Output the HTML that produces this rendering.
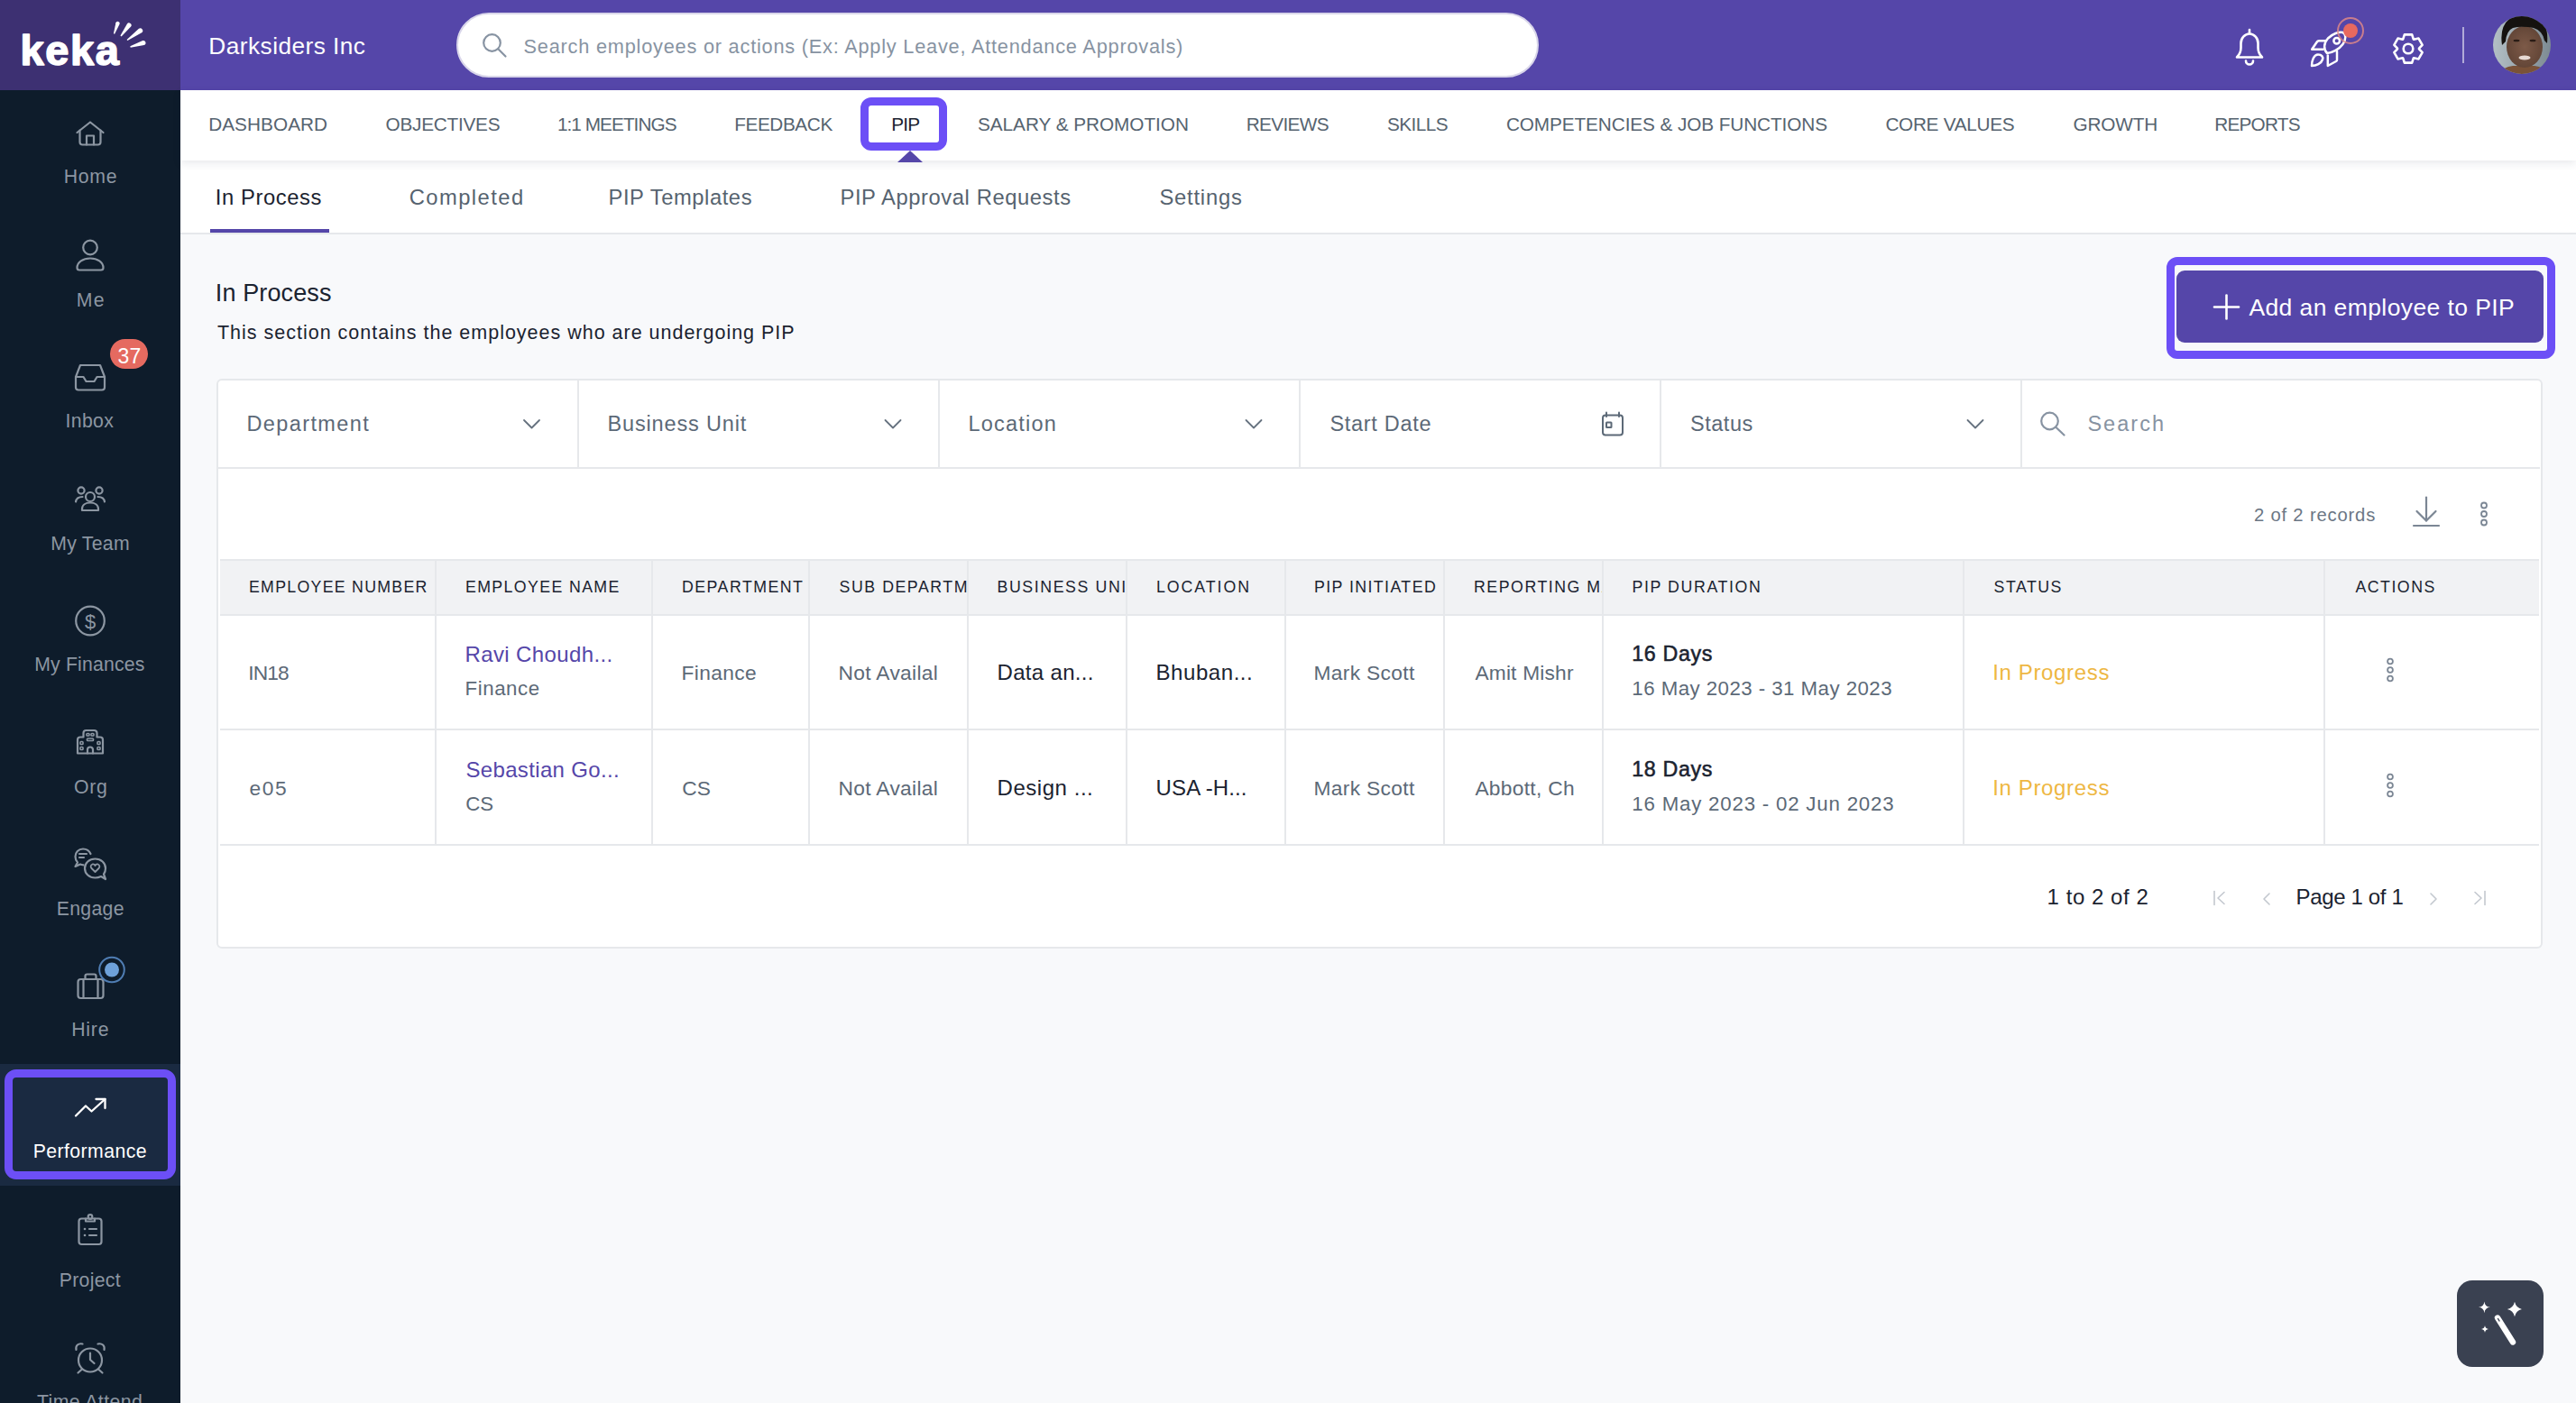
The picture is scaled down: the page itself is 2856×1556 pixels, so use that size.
<!DOCTYPE html>
<html><head><meta charset="utf-8"><style>
html,body{margin:0;padding:0}
body{width:2856px;height:1556px;overflow:hidden;position:relative;background:#f8f9fb;font-family:"Liberation Sans",sans-serif}
.t{position:absolute;white-space:nowrap;z-index:5}
svg{position:absolute;overflow:visible;z-index:4}
</style></head><body>

<div style="position:absolute;left:0;top:0;width:200px;height:1556px;background:#0e1c2b"></div>
<div style="position:absolute;left:0;top:0;width:200px;height:100px;background:#3d3072"></div>
<div style="position:absolute;left:200px;top:0;width:2656px;height:100px;background:#5546a9"></div>
<div style="position:absolute;left:506px;top:14px;width:1196px;height:68px;border:2px solid #d9d6ea;border-radius:36px;background:#fff"></div>
<div style="position:absolute;left:200px;top:100px;width:2656px;height:78px;background:#fff;box-shadow:0 3px 9px rgba(30,40,70,0.10);z-index:2"></div>
<div style="position:absolute;left:200px;top:178px;width:2656px;height:80px;background:#fff;border-bottom:2px solid #e6e8eb"></div>
<div style="position:absolute;left:954px;top:108px;width:78px;height:41px;border:9px solid #6c4ff6;border-radius:12px;z-index:3"></div>
<div style="position:absolute;left:995px;top:167px;width:0;height:0;border-left:14px solid transparent;border-right:14px solid transparent;border-bottom:13px solid #5546a9;z-index:3"></div>
<div style="position:absolute;left:233px;top:254px;width:132px;height:4px;background:#5546a9"></div>
<div style="position:absolute;left:0;top:1180px;width:200px;height:135px;background:#1a2a41"></div>
<div style="position:absolute;left:5px;top:1186px;width:172px;height:104px;border:9px solid #6c4ff6;border-radius:13px"></div>
<div style="position:absolute;left:2402px;top:285px;width:413px;height:95px;border:9px solid #6c4ff6;border-radius:12px"></div>
<div style="position:absolute;left:2413px;top:300px;width:407px;height:80px;border-radius:9px;background:#5546a9"></div>
<div style="position:absolute;left:240px;top:420px;width:2575px;height:628px;border:2px solid #e6e8eb;border-radius:6px;background:#fff"></div>
<div style="position:absolute;left:242px;top:518px;width:2574px;height:2px;background:#e6e8eb"></div>
<div style="position:absolute;left:640px;top:422px;width:2px;height:96px;background:#e6e8eb"></div>
<div style="position:absolute;left:1040px;top:422px;width:2px;height:96px;background:#e6e8eb"></div>
<div style="position:absolute;left:1440px;top:422px;width:2px;height:96px;background:#e6e8eb"></div>
<div style="position:absolute;left:1840px;top:422px;width:2px;height:96px;background:#e6e8eb"></div>
<div style="position:absolute;left:2240px;top:422px;width:2px;height:96px;background:#e6e8eb"></div>
<div style="position:absolute;left:244px;top:620px;width:2571px;height:61px;background:#f1f2f4"></div>
<div style="position:absolute;left:244px;top:620px;width:2571px;height:2px;background:#e6e8eb"></div>
<div style="position:absolute;left:244px;top:681px;width:2571px;height:2px;background:#e6e8eb"></div>
<div style="position:absolute;left:244px;top:807.5px;width:2571px;height:2px;background:#e6e8eb"></div>
<div style="position:absolute;left:244px;top:935.5px;width:2571px;height:2px;background:#e6e8eb"></div>
<div style="position:absolute;left:482px;top:620px;width:2px;height:317px;background:#e6e8eb"></div>
<div style="position:absolute;left:722px;top:620px;width:2px;height:317px;background:#e6e8eb"></div>
<div style="position:absolute;left:896px;top:620px;width:2px;height:317px;background:#e6e8eb"></div>
<div style="position:absolute;left:1072px;top:620px;width:2px;height:317px;background:#e6e8eb"></div>
<div style="position:absolute;left:1248px;top:620px;width:2px;height:317px;background:#e6e8eb"></div>
<div style="position:absolute;left:1424px;top:620px;width:2px;height:317px;background:#e6e8eb"></div>
<div style="position:absolute;left:1600px;top:620px;width:2px;height:317px;background:#e6e8eb"></div>
<div style="position:absolute;left:1776px;top:620px;width:2px;height:317px;background:#e6e8eb"></div>
<div style="position:absolute;left:2176px;top:620px;width:2px;height:317px;background:#e6e8eb"></div>
<div style="position:absolute;left:2576px;top:620px;width:2px;height:317px;background:#e6e8eb"></div>
<div style="position:absolute;left:2724px;top:1420px;width:96px;height:96px;border-radius:17px;background:#3a4151"></div>
<div style="position:absolute;left:122px;top:376px;width:42px;height:33px;border-radius:17px;background:#e56a60;z-index:1"></div>

<svg width="2856" height="1556" viewBox="0 0 2856 1556" style="left:0;top:0"><text x="22.5" y="72" font-family="Liberation Sans" font-weight="700" font-size="47" letter-spacing="1.6" fill="#fff" stroke="#fff" stroke-width="1.6" stroke-linejoin="round">keka</text><path d="M127.07 37.70 L132.58 26.72 A2.20 2.20 0 0 0 128.42 25.28 L125.93 37.30 Z" fill="#fff"/><path d="M134.56 40.42 L145.08 29.56 A2.60 2.60 0 0 0 140.92 26.44 L133.44 39.58 Z" fill="#fff"/><path d="M141.41 45.07 L157.08 36.19 A2.70 2.70 0 0 0 153.92 31.81 L140.59 43.93 Z" fill="#fff"/><path d="M144.71 52.67 L159.77 49.98 A2.60 2.60 0 0 0 158.23 45.02 L144.29 51.33 Z" fill="#fff"/><circle cx="545.5" cy="47.5" r="9.3" fill="none" stroke="#8793a2" stroke-width="2.2"/><line x1="552.5" y1="54.5" x2="560.5" y2="62.5" stroke="#8793a2" stroke-width="2.2" stroke-linecap="round"/><g fill="none" stroke="#fff" stroke-width="2.6" stroke-linejoin="round" stroke-linecap="round"><path d="M2494 33 V36.5"/><path d="M2480 63.5 Q2484.5 59 2484.5 53 V48 A9.5 10.5 0 0 1 2503.5 48 V53 Q2503.5 59 2508 63.5 Z"/><path d="M2490 67.5 A4 4 0 0 0 2498 67.5"/></g><g fill="none" stroke="#fff" stroke-width="2.5" stroke-linejoin="round" stroke-linecap="round"><path d="M2580 59 C2576 55 2576 48 2581 42.5 C2586 37.5 2593 35 2597.5 36 C2601.5 37.5 2601 44 2597.5 49 C2593.5 54.5 2586 58.5 2580 59 Z"/><path d="M2577.8 45.3 H2571 Q2569.5 45.3 2568.8 46.5 L2563.2 54.8 H2575.5"/><path d="M2591 57 V66.5 Q2591 67.5 2590 68 L2580.8 73 V61.5"/><path d="M2563 73 C2563 67 2565.5 60.5 2570 60.5 C2574 60.5 2576 63 2575 66 C2573.5 70.5 2568 73 2563 73 Z"/><circle cx="2590.7" cy="45.2" r="3.3"/></g><circle cx="2606" cy="34" r="14" fill="none" stroke="#e58b86" stroke-opacity="0.8" stroke-width="2"/><circle cx="2606" cy="34" r="8" fill="#e8695f"/><path d="M2664.25 43.47 L2665.84 38.34 L2674.16 38.34 L2675.75 43.47 L2676.24 43.75 L2681.48 42.57 L2685.64 49.78 L2682.00 53.72 L2682.00 54.28 L2685.64 58.22 L2681.48 65.43 L2676.24 64.25 L2675.75 64.53 L2674.16 69.66 L2665.84 69.66 L2664.25 64.53 L2663.76 64.25 L2658.52 65.43 L2654.36 58.22 L2658.00 54.28 L2658.00 53.72 L2654.36 49.78 L2658.52 42.57 L2663.76 43.75 Z" fill="none" stroke="#fff" stroke-width="2.6" stroke-linejoin="round"/><circle cx="2670" cy="54" r="5.3" fill="none" stroke="#fff" stroke-width="2.6"/><rect x="2730" y="30" width="2" height="40" fill="#ffffff" fill-opacity="0.55"/><defs><clipPath id="av"><circle cx="2796" cy="50" r="32"/></clipPath><linearGradient id="avbg" x1="0" y1="0" x2="1" y2="0"><stop offset="0" stop-color="#b3bfc5"/><stop offset="1" stop-color="#7d8b93"/></linearGradient><radialGradient id="sk" cx="0.5" cy="0.5" r="0.6"><stop offset="0" stop-color="#7d5a48"/><stop offset="1" stop-color="#5e4234"/></radialGradient></defs><g clip-path="url(#av)"><rect x="2764" y="18" width="64" height="64" fill="url(#avbg)"/><path d="M2770 84 Q2774 74 2786 73 H2810 Q2822 74 2826 84 Z" fill="#7a5238"/><ellipse cx="2799" cy="52" rx="20" ry="23" fill="url(#sk)"/><path d="M2774 50 Q2771 30 2782 21 Q2797 11 2813 18 Q2826 26 2824 48 L2821 45 Q2819 34 2809 31 Q2797 28.5 2786 31 Q2779 34 2778 46 Z" fill="#15120f"/><ellipse cx="2790" cy="45" rx="3.5" ry="1.3" fill="#2a1c15"/><ellipse cx="2808" cy="45" rx="3.5" ry="1.3" fill="#2a1c15"/><ellipse cx="2799" cy="64" rx="6.5" ry="2.4" fill="#e6d9d2"/></g><g fill="none" stroke="#8c96a2" stroke-width="2.2" stroke-linejoin="round" stroke-linecap="round"><path d="M85.5 147 L100 135.5 L114.5 147"/><path d="M88.5 144.5 V157.5 a3 3 0 0 0 3 3 H108.5 a3 3 0 0 0 3 -3 V144.5"/><path d="M96 160.5 V150.5 H104 V160.5"/></g><g fill="none" stroke="#8c96a2" stroke-width="2.2" stroke-linejoin="round" stroke-linecap="round"><circle cx="100" cy="274.5" r="7.8"/><path d="M88 299.5 H112 a2.5 2.5 0 0 0 2.5 -2.5 C114.5 290.5 108 286.5 100 286.5 C92 286.5 85.5 290.5 85.5 297 a2.5 2.5 0 0 0 2.5 2.5 Z"/></g><g fill="none" stroke="#8c96a2" stroke-width="2.2" stroke-linejoin="round" stroke-linecap="round"><path d="M89 405 H111 L116 418 V429.5 a3 3 0 0 1 -3 3 H87 a3 3 0 0 1 -3 -3 V418 Z"/><path d="M84 418 H92.5 L95.5 423 H104.5 L107.5 418 H116"/></g><g fill="none" stroke="#8c96a2" stroke-width="2.2" stroke-linejoin="round" stroke-linecap="round"><circle cx="100" cy="551" r="5"/><path d="M91 566 V564.5 C91 560 95 557.5 100 557.5 C105 557.5 109 560 109 564.5 V566 Z"/><circle cx="90" cy="544" r="3.6"/><circle cx="110" cy="544" r="3.6"/><path d="M84 556.5 C84.5 553 87 551 91.5 551"/><path d="M116 556.5 C115.5 553 113 551 108.5 551"/></g><g fill="none" stroke="#8c96a2" stroke-width="2.2" stroke-linejoin="round" stroke-linecap="round"><circle cx="100" cy="688.5" r="15.8"/></g><text x="100" y="697" text-anchor="middle" font-family="Liberation Sans" font-size="22" fill="#8c96a2">$</text><g fill="none" stroke="#8c96a2" stroke-width="2.2" stroke-linejoin="round" stroke-linecap="round"><path d="M86 835.5 V820.5 a3 3 0 0 1 3 -3 H92.5 V813 a3 3 0 0 1 3 -3 H104.5 a3 3 0 0 1 3 3 V817.5 H111 a3 3 0 0 1 3 3 V835.5 Z"/><path d="M97 835.5 V831.5 a3 3 0 0 1 6 0 V835.5"/></g><rect x="89" y="822.5" width="3" height="3" rx="0.8" fill="none" stroke="#8c96a2" stroke-width="1.6"/><rect x="89" y="828.5" width="3" height="3" rx="0.8" fill="none" stroke="#8c96a2" stroke-width="1.6"/><rect x="108" y="822.5" width="3" height="3" rx="0.8" fill="none" stroke="#8c96a2" stroke-width="1.6"/><rect x="108" y="828.5" width="3" height="3" rx="0.8" fill="none" stroke="#8c96a2" stroke-width="1.6"/><rect x="96" y="813.5" width="3" height="2.5" rx="0.8" fill="none" stroke="#8c96a2" stroke-width="1.6"/><rect x="101" y="813.5" width="3" height="2.5" rx="0.8" fill="none" stroke="#8c96a2" stroke-width="1.6"/><rect x="96.5" y="819" width="7" height="2.5" rx="0.8" fill="none" stroke="#8c96a2" stroke-width="1.6"/><g fill="none" stroke="#8c96a2" stroke-width="2.2" stroke-linejoin="round" stroke-linecap="round"><path d="M100.5 947 C99 943.5 96 941.5 92 941.5 C87 941.5 83.5 945.5 83.5 950 C83.5 953 84.5 955 86 956.5 L83.5 961 L89 958.5 C90 959 91 959.2 92.5 959.3"/><path d="M105.5 952.5 C99 952.5 94 957 94 963 C94 969 99 973.5 105.5 973.5 C108 973.5 110 973 112 972 L117 975 L115 969.5 C116.5 967.5 117 965.5 117 963 C117 957 112 952.5 105.5 952.5 Z"/><path d="M88 947 H96"/><path d="M88 951 H93"/><path d="M105.5 967 L101.5 963 C100 961.5 100.5 959 102.5 958.5 C104 958.2 105 959 105.5 960 C106 959 107 958.2 108.5 958.5 C110.5 959 111 961.5 109.5 963 Z" stroke-width="1.8"/></g><g fill="none" stroke="#8c96a2" stroke-width="2.2" stroke-linejoin="round" stroke-linecap="round"><rect x="86.5" y="1086" width="28" height="21" rx="3"/><path d="M94.5 1086 V1082.5 a2 2 0 0 1 2 -2 H104.5 a2 2 0 0 1 2 2 V1086"/><path d="M92.5 1086 V1107"/><path d="M108.5 1086 V1107"/></g><circle cx="124" cy="1075.5" r="13.8" fill="#0e1c2b" stroke="#4f7db3" stroke-width="2"/><circle cx="124" cy="1075.5" r="8" fill="#6ea1d9"/><g fill="none" stroke="#fff" stroke-width="2.3" stroke-linejoin="round" stroke-linecap="round"><path d="M84 1237.5 L95 1226.5 L101.5 1232.5 L116.5 1219"/><path d="M106.5 1219 H116.5 V1229"/></g><g fill="none" stroke="#8c96a2" stroke-width="2.2" stroke-linejoin="round" stroke-linecap="round"><rect x="87.5" y="1351.5" width="25" height="28.5" rx="3"/><path d="M95 1351.5 V1354.5 H105 V1351.5"/><circle cx="100" cy="1349.5" r="2.3"/><path d="M99 1363 H107"/><path d="M99 1370 H107"/></g><circle cx="94" cy="1363" r="1.3" fill="#8c96a2"/><circle cx="94" cy="1370" r="1.3" fill="#8c96a2"/><g fill="none" stroke="#8c96a2" stroke-width="2.2" stroke-linejoin="round" stroke-linecap="round"><circle cx="100" cy="1508.5" r="13"/><path d="M100 1500.5 V1508 L104.5 1512"/><path d="M84.5 1497 C83.5 1492 87 1489.5 91.5 1490.5"/><path d="M115.5 1497 C116.5 1492 113 1489.5 108.5 1490.5"/><path d="M91 1518.5 L86.5 1522.5"/><path d="M109 1518.5 L113.5 1522.5"/></g><g stroke="#fff" stroke-width="2.6" stroke-linecap="round"><path d="M2468.5 327.5 V353.5"/><path d="M2455 340.5 H2482"/></g><path d="M581.0 466 L589.5 474.5 L598.0 466" fill="none" stroke="#66727f" stroke-width="1.8" stroke-linecap="round" stroke-linejoin="round"/><path d="M981.5 466 L990 474.5 L998.5 466" fill="none" stroke="#66727f" stroke-width="1.8" stroke-linecap="round" stroke-linejoin="round"/><path d="M1381.5 466 L1390 474.5 L1398.5 466" fill="none" stroke="#66727f" stroke-width="1.8" stroke-linecap="round" stroke-linejoin="round"/><path d="M2181.5 466 L2190 474.5 L2198.5 466" fill="none" stroke="#66727f" stroke-width="1.8" stroke-linecap="round" stroke-linejoin="round"/><g fill="none" stroke="#5c6977" stroke-width="2" stroke-linejoin="round" stroke-linecap="round"><rect x="1777" y="460.5" width="22" height="22" rx="3"/><path d="M1781 457.5 V462"/><path d="M1795 457.5 V462"/><rect x="1781" y="468.5" width="5.5" height="5.5" rx="0.5"/></g><circle cx="2272.5" cy="467" r="9.3" fill="none" stroke="#8793a2" stroke-width="2.2"/><line x1="2279.5" y1="474" x2="2288.5" y2="482.5" stroke="#8793a2" stroke-width="2.2" stroke-linecap="round"/><g fill="none" stroke="#7b8694" stroke-width="2.2" stroke-linecap="round" stroke-linejoin="round"><path d="M2690 551.5 V577.5"/><path d="M2679.5 567 L2690 577.5 L2700.5 567"/><path d="M2676 583 H2704"/></g><circle cx="2754" cy="560.5" r="3" fill="none" stroke="#7b8694" stroke-width="1.8"/><circle cx="2754" cy="570" r="3" fill="none" stroke="#7b8694" stroke-width="1.8"/><circle cx="2754" cy="579.5" r="3" fill="none" stroke="#7b8694" stroke-width="1.8"/><circle cx="2650" cy="733.5" r="2.9" fill="none" stroke="#7b8694" stroke-width="1.8"/><circle cx="2650" cy="743.0" r="2.9" fill="none" stroke="#7b8694" stroke-width="1.8"/><circle cx="2650" cy="752.5" r="2.9" fill="none" stroke="#7b8694" stroke-width="1.8"/><circle cx="2650" cy="861.5" r="2.9" fill="none" stroke="#7b8694" stroke-width="1.8"/><circle cx="2650" cy="871.0" r="2.9" fill="none" stroke="#7b8694" stroke-width="1.8"/><circle cx="2650" cy="880.5" r="2.9" fill="none" stroke="#7b8694" stroke-width="1.8"/><g fill="none" stroke="#c3c8cf" stroke-width="1.6" stroke-linecap="round" stroke-linejoin="round"><path d="M2455 988.5 V1003.5"/><path d="M2466 989.5 L2459 996 L2466 1002.5"/><path d="M2516 991 L2510 997 L2516 1003"/><path d="M2695 991 L2701 997 L2695 1003"/><path d="M2744 989.5 L2751 996 L2744 1002.5"/><path d="M2755 988.5 V1003.5"/></g><path d="M2754.4 1443.3999999999999 Q2754.9500000000003 1449.25 2760.8 1449.8 Q2754.9500000000003 1450.35 2754.4 1456.2 Q2753.85 1450.35 2748.0 1449.8 Q2753.85 1449.25 2754.4 1443.3999999999999 Z" fill="#fff"/><path d="M2788 1443.8 Q2789.5 1450.5 2796.2 1452 Q2789.5 1453.5 2788 1460.2 Q2786.5 1453.5 2779.8 1452 Q2786.5 1450.5 2788 1443.8 Z" fill="#fff"/><path d="M2755 1470 Q2755.4 1473.6 2759 1474 Q2755.4 1474.4 2755 1478 Q2754.6 1474.4 2751 1474 Q2754.6 1473.6 2755 1470 Z" fill="#fff"/><line x1="2769" y1="1461.5" x2="2786" y2="1488.5" stroke="#fff" stroke-width="6.4" stroke-linecap="round"/><line x1="2769.5" y1="1462.5" x2="2771" y2="1465" stroke="#3a4151" stroke-width="1.4" stroke-linecap="round"/></svg>
<div class="t" style="left:231.35px;top:37.88px;font-size:26.25px;line-height:26.25px;letter-spacing:0.454px;color:#ffffff;">Darksiders Inc</div>
<div class="t" style="left:580.50px;top:40.69px;font-size:21.75px;line-height:21.75px;letter-spacing:0.778px;color:#8793a2;">Search employees or actions (Ex: Apply Leave, Attendance Approvals)</div>
<div class="t" style="left:231.20px;top:127.64px;font-size:20.75px;line-height:20.75px;letter-spacing:0.056px;color:#56636f;">DASHBOARD</div>
<div class="t" style="left:427.50px;top:127.64px;font-size:20.75px;line-height:20.75px;letter-spacing:-0.233px;color:#56636f;">OBJECTIVES</div>
<div class="t" style="left:617.90px;top:127.64px;font-size:20.75px;line-height:20.75px;letter-spacing:-0.940px;color:#56636f;">1:1 MEETINGS</div>
<div class="t" style="left:814.20px;top:127.64px;font-size:20.75px;line-height:20.75px;letter-spacing:-0.401px;color:#56636f;">FEEDBACK</div>
<div class="t" style="left:988.20px;top:127.64px;font-size:20.75px;line-height:20.75px;letter-spacing:-0.753px;color:#1b2330;">PIP</div>
<div class="t" style="left:1084.00px;top:127.64px;font-size:20.75px;line-height:20.75px;letter-spacing:-0.032px;color:#56636f;">SALARY &amp; PROMOTION</div>
<div class="t" style="left:1381.70px;top:127.64px;font-size:20.75px;line-height:20.75px;letter-spacing:-0.643px;color:#56636f;">REVIEWS</div>
<div class="t" style="left:1538.00px;top:127.64px;font-size:20.75px;line-height:20.75px;letter-spacing:-0.565px;color:#56636f;">SKILLS</div>
<div class="t" style="left:1669.90px;top:127.64px;font-size:20.75px;line-height:20.75px;letter-spacing:-0.089px;color:#56636f;">COMPETENCIES &amp; JOB FUNCTIONS</div>
<div class="t" style="left:2090.40px;top:127.64px;font-size:20.75px;line-height:20.75px;letter-spacing:-0.292px;color:#56636f;">CORE VALUES</div>
<div class="t" style="left:2298.40px;top:127.64px;font-size:20.75px;line-height:20.75px;letter-spacing:-0.125px;color:#56636f;">GROWTH</div>
<div class="t" style="left:2455.20px;top:127.64px;font-size:20.75px;line-height:20.75px;letter-spacing:-0.765px;color:#56636f;">REPORTS</div>
<div class="t" style="left:238.80px;top:207.10px;font-size:23.75px;line-height:23.75px;letter-spacing:0.597px;color:#1b2330;">In Process</div>
<div class="t" style="left:453.70px;top:207.10px;font-size:23.75px;line-height:23.75px;letter-spacing:1.444px;color:#56636f;">Completed</div>
<div class="t" style="left:674.50px;top:207.10px;font-size:23.75px;line-height:23.75px;letter-spacing:0.563px;color:#56636f;">PIP Templates</div>
<div class="t" style="left:931.50px;top:207.10px;font-size:23.75px;line-height:23.75px;letter-spacing:0.591px;color:#56636f;">PIP Approval Requests</div>
<div class="t" style="left:1285.40px;top:207.10px;font-size:23.75px;line-height:23.75px;letter-spacing:0.809px;color:#56636f;">Settings</div>
<div class="t" style="left:238.79px;top:311.64px;font-size:27px;line-height:27px;letter-spacing:0.122px;color:#1b2330;">In Process</div>
<div class="t" style="left:241.00px;top:359.00px;font-size:21.5px;line-height:21.5px;letter-spacing:0.990px;color:#1b2330;">This section contains the employees who are undergoing PIP</div>
<div class="t" style="left:2493.40px;top:327.87px;font-size:26.5px;line-height:26.5px;letter-spacing:0.406px;color:#ffffff;">Add an employee to PIP</div>
<div class="t" style="left:273.50px;top:459.11px;font-size:23.5px;line-height:23.5px;letter-spacing:1.383px;color:#5c6977;">Department</div>
<div class="t" style="left:673.50px;top:459.11px;font-size:23.5px;line-height:23.5px;letter-spacing:0.838px;color:#5c6977;">Business Unit</div>
<div class="t" style="left:1073.50px;top:459.11px;font-size:23.5px;line-height:23.5px;letter-spacing:1.210px;color:#5c6977;">Location</div>
<div class="t" style="left:1474.40px;top:459.11px;font-size:23.5px;line-height:23.5px;letter-spacing:0.708px;color:#5c6977;">Start Date</div>
<div class="t" style="left:1873.90px;top:459.11px;font-size:23.5px;line-height:23.5px;letter-spacing:0.566px;color:#5c6977;">Status</div>
<div class="t" style="left:2314.40px;top:459.11px;font-size:23.5px;line-height:23.5px;letter-spacing:2.042px;color:#8793a2;">Search</div>
<div class="t" style="left:2498.90px;top:560.96px;font-size:20.25px;line-height:20.25px;letter-spacing:0.816px;color:#6b7684;">2 of 2 records</div>
<div class="t" style="left:276.00px;top:642.97px;font-size:17.75px;line-height:17.75px;letter-spacing:1.279px;color:#1b2330;">EMPLOYEE NUMBER</div>
<div class="t" style="left:516.00px;top:642.97px;font-size:17.75px;line-height:17.75px;letter-spacing:1.372px;color:#1b2330;">EMPLOYEE NAME</div>
<div class="t" style="left:756.00px;top:642.97px;font-size:17.75px;line-height:17.75px;letter-spacing:1.478px;color:#1b2330;">DEPARTMENT</div>
<div class="t" style="left:930.60px;top:642.97px;font-size:17.75px;line-height:17.75px;letter-spacing:1.531px;color:#1b2330;">SUB DEPARTM</div>
<div class="t" style="left:1105.50px;top:642.97px;font-size:17.75px;line-height:17.75px;letter-spacing:1.588px;color:#1b2330;">BUSINESS UNI</div>
<div class="t" style="left:1282.00px;top:642.97px;font-size:17.75px;line-height:17.75px;letter-spacing:1.943px;color:#1b2330;">LOCATION</div>
<div class="t" style="left:1457.00px;top:642.97px;font-size:17.75px;line-height:17.75px;letter-spacing:1.417px;color:#1b2330;">PIP INITIATED</div>
<div class="t" style="left:1634.00px;top:642.97px;font-size:17.75px;line-height:17.75px;letter-spacing:1.519px;color:#1b2330;width:142.00px;overflow:hidden;">REPORTING MA</div>
<div class="t" style="left:1809.50px;top:642.97px;font-size:17.75px;line-height:17.75px;letter-spacing:1.600px;color:#1b2330;">PIP DURATION</div>
<div class="t" style="left:2210.60px;top:642.97px;font-size:17.75px;line-height:17.75px;letter-spacing:1.471px;color:#1b2330;">STATUS</div>
<div class="t" style="left:2611.40px;top:642.97px;font-size:17.75px;line-height:17.75px;letter-spacing:1.507px;color:#1b2330;">ACTIONS</div>
<div class="t" style="left:275.30px;top:735.04px;font-size:22.75px;line-height:22.75px;letter-spacing:-0.934px;color:#5c6977;">IN18</div>
<div class="t" style="left:515.50px;top:713.78px;font-size:24px;line-height:24px;letter-spacing:0.386px;color:#5546a9;">Ravi Choudh...</div>
<div class="t" style="left:515.60px;top:753.27px;font-size:22.25px;line-height:22.25px;letter-spacing:0.553px;color:#5c6977;">Finance</div>
<div class="t" style="left:755.60px;top:735.04px;font-size:22.75px;line-height:22.75px;letter-spacing:0.336px;color:#5c6977;">Finance</div>
<div class="t" style="left:929.60px;top:735.04px;font-size:22.75px;line-height:22.75px;letter-spacing:0.313px;color:#5c6977;">Not Availal</div>
<div class="t" style="left:1105.50px;top:733.98px;font-size:24px;line-height:24px;letter-spacing:0.323px;color:#1b2330;">Data an...</div>
<div class="t" style="left:1281.50px;top:733.98px;font-size:24px;line-height:24px;letter-spacing:0.565px;color:#1b2330;">Bhuban...</div>
<div class="t" style="left:1456.60px;top:735.04px;font-size:22.75px;line-height:22.75px;letter-spacing:0.323px;color:#5c6977;">Mark Scott</div>
<div class="t" style="left:1635.40px;top:735.04px;font-size:22.75px;line-height:22.75px;letter-spacing:0.183px;color:#5c6977;">Amit Mishr</div>
<div class="t" style="left:1809.20px;top:714.42px;font-size:23.25px;line-height:23.25px;letter-spacing:0.656px;-webkit-text-stroke:0.55px currentColor;color:#1b2330;">16 Days</div>
<div class="t" style="left:1809.30px;top:753.27px;font-size:22.25px;line-height:22.25px;letter-spacing:0.467px;color:#5c6977;">16 May 2023 - 31 May 2023</div>
<div class="t" style="left:2209.20px;top:733.98px;font-size:24px;line-height:24px;letter-spacing:0.648px;color:#eeb743;">In Progress</div>
<div class="t" style="left:276.50px;top:863.04px;font-size:22.75px;line-height:22.75px;letter-spacing:1.548px;color:#5c6977;">e05</div>
<div class="t" style="left:516.40px;top:841.78px;font-size:24px;line-height:24px;letter-spacing:0.352px;color:#5546a9;">Sebastian Go...</div>
<div class="t" style="left:516.30px;top:881.27px;font-size:22.25px;line-height:22.25px;color:#5c6977;">CS</div>
<div class="t" style="left:756.30px;top:863.04px;font-size:22.75px;line-height:22.75px;color:#5c6977;">CS</div>
<div class="t" style="left:929.60px;top:863.04px;font-size:22.75px;line-height:22.75px;letter-spacing:0.313px;color:#5c6977;">Not Availal</div>
<div class="t" style="left:1105.50px;top:861.98px;font-size:24px;line-height:24px;letter-spacing:0.543px;color:#1b2330;">Design ...</div>
<div class="t" style="left:1281.60px;top:861.98px;font-size:24px;line-height:24px;letter-spacing:0.103px;color:#1b2330;">USA -H...</div>
<div class="t" style="left:1456.60px;top:863.04px;font-size:22.75px;line-height:22.75px;letter-spacing:0.323px;color:#5c6977;">Mark Scott</div>
<div class="t" style="left:1635.40px;top:863.04px;font-size:22.75px;line-height:22.75px;letter-spacing:0.295px;color:#5c6977;">Abbott, Ch</div>
<div class="t" style="left:1809.20px;top:842.42px;font-size:23.25px;line-height:23.25px;letter-spacing:0.656px;-webkit-text-stroke:0.55px currentColor;color:#1b2330;">18 Days</div>
<div class="t" style="left:1809.30px;top:881.27px;font-size:22.25px;line-height:22.25px;letter-spacing:0.807px;color:#5c6977;">16 May 2023 - 02 Jun 2023</div>
<div class="t" style="left:2209.20px;top:861.98px;font-size:24px;line-height:24px;letter-spacing:0.648px;color:#eeb743;">In Progress</div>
<div class="t" style="left:2269.60px;top:982.88px;font-size:24px;line-height:24px;letter-spacing:0.540px;color:#1b2330;">1 to 2 of 2</div>
<div class="t" style="left:2545.50px;top:982.88px;font-size:24px;line-height:24px;letter-spacing:-0.352px;color:#1b2330;">Page 1 of 1</div>
<div class="t" style="left:70.70px;top:186.41px;font-size:21.25px;line-height:21.25px;letter-spacing:0.711px;color:#8c96a2;">Home</div>
<div class="t" style="left:84.70px;top:322.51px;font-size:21.25px;line-height:21.25px;letter-spacing:1.299px;color:#8c96a2;">Me</div>
<div class="t" style="left:72.50px;top:456.51px;font-size:21.25px;line-height:21.25px;letter-spacing:0.335px;color:#8c96a2;">Inbox</div>
<div class="t" style="left:56.20px;top:592.51px;font-size:21.25px;line-height:21.25px;letter-spacing:0.268px;color:#8c96a2;">My Team</div>
<div class="t" style="left:38.20px;top:727.01px;font-size:21.25px;line-height:21.25px;letter-spacing:0.167px;color:#8c96a2;">My Finances</div>
<div class="t" style="left:81.90px;top:862.51px;font-size:21.25px;line-height:21.25px;letter-spacing:0.797px;color:#8c96a2;">Org</div>
<div class="t" style="left:62.70px;top:997.51px;font-size:21.25px;line-height:21.25px;letter-spacing:0.311px;color:#8c96a2;">Engage</div>
<div class="t" style="left:79.20px;top:1131.51px;font-size:21.25px;line-height:21.25px;letter-spacing:0.785px;color:#8c96a2;">Hire</div>
<div class="t" style="left:36.70px;top:1267.21px;font-size:21.25px;line-height:21.25px;letter-spacing:0.417px;color:#ffffff;">Performance</div>
<div class="t" style="left:65.70px;top:1409.51px;font-size:21.25px;line-height:21.25px;letter-spacing:0.311px;color:#8c96a2;">Project</div>
<div class="t" style="left:41.00px;top:1544.51px;font-size:21.25px;line-height:21.25px;letter-spacing:0.415px;color:#8c96a2;">Time Attend</div>
<div class="t" style="left:130.60px;top:384.03px;font-size:23px;line-height:23px;color:#ffffff;">37</div>
</body></html>
